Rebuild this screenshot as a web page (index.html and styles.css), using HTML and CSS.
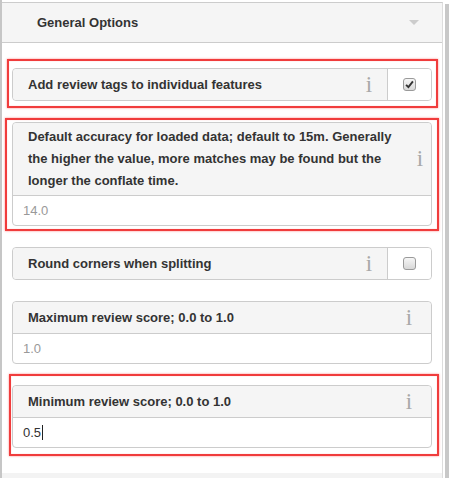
FILE: index.html
```html
<!DOCTYPE html>
<html>
<head>
<meta charset="utf-8">
<link rel="stylesheet" href="styles.css">
</head>
<body>
<div class="frame">
  <div class="rail"></div>
  <section class="panel">
    <header class="panel-head">
      <span class="panel-title">General Options</span>
      <span class="caret"></span>
    </header>
    <div class="panel-body">
      <div class="item item-check hl hl-a">
        <div class="item-head">
          <span class="label">Add review tags to individual features</span>
          <span class="info info-check">i</span>
          <span class="check-cell"><span class="box checked"><svg viewBox="0 0 10 10" width="9" height="9"><path d="M1.2 5.4 L3.8 8 L8.8 1.6" fill="none" stroke="#333" stroke-width="2.1"/></svg></span></span>
        </div>
      </div>

      <div class="item hl hl-b">
        <div class="item-head item-head-multi">
          <span class="label label-multi">Default accuracy for loaded data; default to 15m. Generally the higher the value, more matches may be found but the longer the conflate time.</span>
          <span class="info info-wide">i</span>
        </div>
        <div class="field placeholder">14.0</div>
      </div>

      <div class="item item-check">
        <div class="item-head">
          <span class="label">Round corners when splitting</span>
          <span class="info info-check">i</span>
          <span class="check-cell"><span class="box"></span></span>
        </div>
      </div>

      <div class="item">
        <div class="item-head">
          <span class="label">Maximum review score; 0.0 to 1.0</span>
          <span class="info">i</span>
        </div>
        <div class="field placeholder">1.0</div>
      </div>

      <div class="item hl hl-c">
        <div class="item-head">
          <span class="label">Minimum review score; 0.0 to 1.0</span>
          <span class="info">i</span>
        </div>
        <div class="field value">0.5<span class="cursor"></span></div>
      </div>
    </div>
    <div class="panel-foot"></div>
  </section>
  <div class="scroll"><div class="thumb"></div></div>
</div>
</body>
</html>
```

FILE: styles.css
```css
* { box-sizing: border-box; }
html, body { margin: 0; padding: 0; background: #fff; }
body {
  font-family: "Liberation Sans", Arial, sans-serif;
  font-size: 13px;
  color: #333;
}
.frame {
  display: flex;
  height: 478px;
  overflow: hidden;
}
.rail {
  width: 2px;
  background: #c6c6c6;
  flex: none;
}
.panel {
  width: 441px;
  flex: none;
  margin-top: 2px;
  border-top: 1px solid #cccccc;
  border-right: 1px solid #dddddd;
  display: flex;
  flex-direction: column;
}
.panel-head {
  height: 40px;
  flex: none;
  background: #f5f5f5;
  border-bottom: 1px solid #cccccc;
  display: flex;
  align-items: center;
  padding-left: 35px;
  padding-right: 23px;
}
.panel-title {
  font-weight: bold;
  font-size: 13px;
  color: #333;
}
.caret {
  margin-left: auto;
  width: 0;
  height: 0;
  border-left: 5px solid transparent;
  border-right: 5px solid transparent;
  border-top: 5px solid #cccccc;
}
.panel-body {
  flex: none;
  padding: 25px 10px 25px 10px;
  display: flex;
  flex-direction: column;
  gap: 21px;
}
.panel-foot {
  flex: 1;
  background: #f3f3f3;
}
.scroll {
  flex: none;
  width: 10px;
  padding-left: 2px;
  padding-top: 4px;
}
.thumb {
  width: 4px;
  height: 100%;
  background: #c8c8c8;
}

.item {
  border: 1px solid #cccccc;
  border-radius: 4px;
  background: #fff;
}
.item-head {
  min-height: 31px;
  background: #f5f5f5;
  border-radius: 4px 4px 0 0;
  display: flex;
  align-items: center;
}
.item-check .item-head { border-radius: 4px; }
.item-head-multi {
  padding: 3px 0;
}
.label {
  flex: 1;
  padding-left: 15px;
  font-weight: bold;
  font-size: 13px;
  line-height: 18px;
  color: #333;
}
.label-multi {
  line-height: 22px;
}
.info {
  width: 20px;
  flex: none;
  text-align: center;
  font-family: "Liberation Serif", "Times New Roman", serif;
  font-size: 23px;
  line-height: 20px;
  color: #a8a8a8;
  margin-right: 12px;
}
.info-check { margin-right: 8px; }
.info-wide { margin-right: 1px; }
.check-cell {
  width: 44px;
  align-self: stretch;
  flex: none;
  border-left: 1px solid #cccccc;
  background: #fff;
  border-radius: 0 4px 4px 0;
  display: flex;
  align-items: center;
  justify-content: center;
}
.box {
  width: 13px;
  height: 13px;
  border: 1px solid #9a9a9a;
  border-radius: 3px;
  background: linear-gradient(#f6f6f6, #d8d8d8);
  display: flex;
  align-items: center;
  justify-content: center;
}
.field {
  height: 30px;
  border-top: 1px solid #cccccc;
  padding-left: 10px;
  display: flex;
  align-items: center;
  font-size: 13px;
}
.placeholder { color: #999; }
.value { color: #333; }
.cursor {
  display: inline-block;
  width: 1px;
  height: 15px;
  background: #222;
  margin-left: 1px;
}

.hl { position: relative; }
.hl::after {
  content: "";
  position: absolute;
  border: 2px solid #f03c3c;
  box-shadow: 0 0 2px rgba(255, 60, 60, 0.6), inset 0 0 1px rgba(255, 60, 60, 0.5);
  pointer-events: none;
}
.hl-a::after { top: -10px; right: -7px; bottom: -8px; left: -6px; }
.hl-b::after { top: -5px; right: -8px; bottom: -6px; left: -8px; }
.hl-c::after { top: -12px; right: -8px; bottom: -9px; left: -4px; }
```
